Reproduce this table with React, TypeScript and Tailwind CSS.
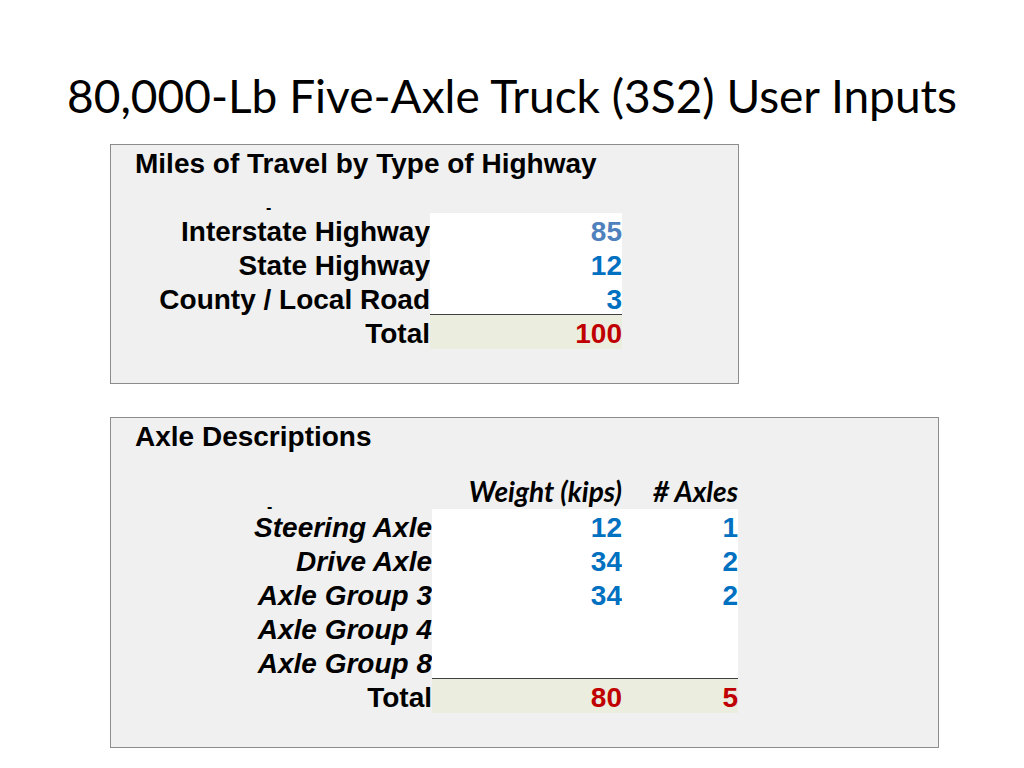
const miles = [
  { label: "Interstate Highway", value: "85", color: "text-[#4f81bd]" },
  { label: "State Highway", value: "12", color: "text-[#0070c0]" },
  { label: "County / Local Road", value: "3", color: "text-[#0070c0]" },
];

const axles = [
  { label: "Steering Axle", weight: "12", count: "1" },
  { label: "Drive Axle", weight: "34", count: "2" },
  { label: "Axle Group 3", weight: "34", count: "2" },
  { label: "Axle Group 4", weight: "", count: "" },
  { label: "Axle Group 8", weight: "", count: "" },
];

const arial = "font-['Liberation_Sans',Arial,sans-serif]";
// cells are 34px tall, text sits 2px low like the spreadsheet export
const cell = "h-[34px] leading-[38px] text-right";

export default function App() {
  return (
    <div className="w-[1024px] h-[768px] bg-white overflow-hidden text-black">
      {/* Title */}
      <h1 className="pt-[68px] h-[125px] text-center font-['Lato',sans-serif] text-[46px] leading-[56px] font-normal">
        80,000-Lb Five-Axle Truck (3S2) User Inputs
      </h1>

      {/* Miles of travel */}
      <div className={`mt-[19px] ml-[110px] w-[629px] h-[240px] border border-[#8c8c8c] bg-[#f0f0f0] ${arial} font-bold`}>
        <div className="pl-[24px] h-[38px] leading-[38px] text-[28px]">Miles of Travel by Type of Highway</div>
        <div className="h-[30px] flex items-end pl-[155px] pb-[3px]">
          <span className="block text-[16px] leading-[4px]">-</span>
        </div>
        <div className="grid grid-cols-[319px_192px] text-[28px]">
          {miles.map((row, i) => (
            <div key={row.label} className="contents">
              <div className={cell}>{row.label}</div>
              <div className={`${cell} bg-white ${row.color} ${i === miles.length - 1 ? "border-b border-[#404040]" : ""}`}>
                {row.value}
              </div>
            </div>
          ))}
          <div className={cell}>Total</div>
          <div className={`${cell} bg-[#ebeddf] text-[#c00000]`}>100</div>
        </div>
      </div>

      {/* Axle descriptions */}
      <div className={`mt-[33px] ml-[110px] w-[829px] h-[331px] border border-[#8c8c8c] bg-[#f0f0f0] ${arial} font-bold`}>
        <div className="pl-[24px] h-[38px] leading-[38px] text-[28px]">Axle Descriptions</div>
        <div className="h-[19px]" />
        <div className="grid grid-cols-[321px_190px_116px] text-[28px]">
          <div className="flex items-end pl-[156px]">
            <span className="block text-[16px] leading-[4px]">-</span>
          </div>
          <div className="h-[34px] leading-[32px] text-right italic font-['Lato',sans-serif]">Weight (kips)</div>
          <div className="h-[34px] leading-[32px] text-right italic font-['Lato',sans-serif]">{"# Axles"}</div>
          {axles.map((row, i) => {
            const last = i === axles.length - 1 ? "border-b border-[#404040]" : "";
            return (
              <div key={row.label} className="contents">
                <div className={`${cell} italic`}>{row.label}</div>
                <div className={`${cell} bg-white text-[#0070c0] ${last}`}>{row.weight}</div>
                <div className={`${cell} bg-white text-[#0070c0] ${last}`}>{row.count}</div>
              </div>
            );
          })}
          <div className={cell}>Total</div>
          <div className={`${cell} bg-[#ebeddf] text-[#c00000]`}>80</div>
          <div className={`${cell} bg-[#ebeddf] text-[#c00000]`}>5</div>
        </div>
      </div>
    </div>
  );
}
